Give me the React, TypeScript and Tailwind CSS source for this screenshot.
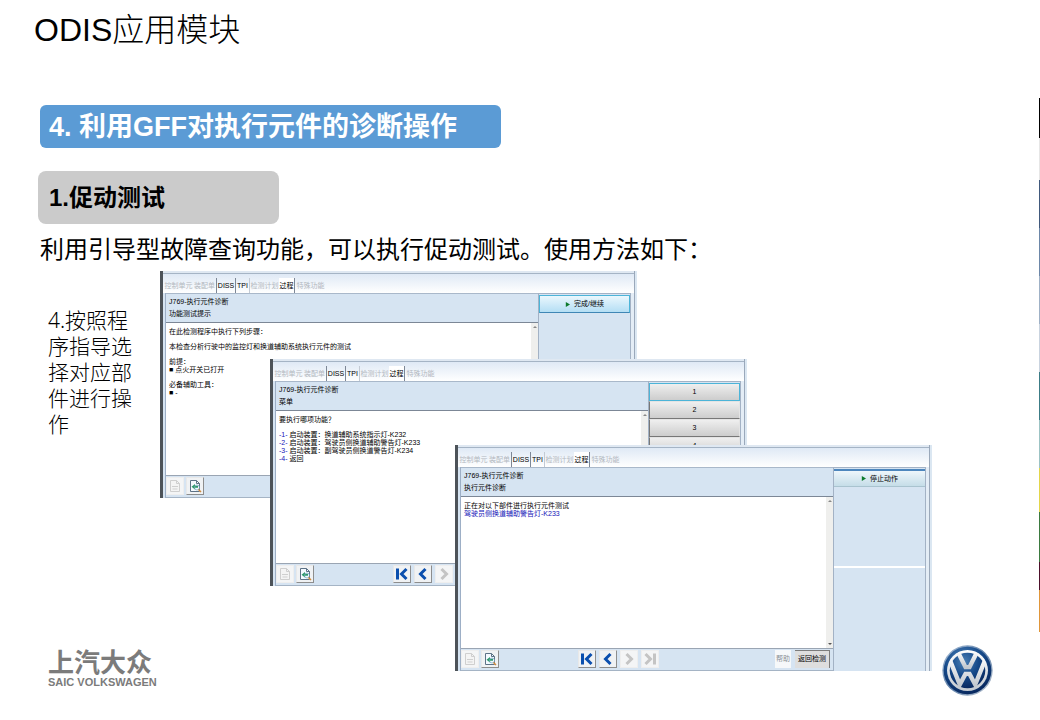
import React from 'react';

type WindowBody = {
  id: string;
  subtitle: string;
  place: string;
  height: string;
  groups: { text: string; mark?: string; link?: boolean }[][];
  showHelp?: boolean;
  split?: boolean;
  actions: React.ReactNode;
};

const TABS = ['控制单元', '装配单', 'DISS', 'TPI', '检测计划', '过程', '特殊功能'];

const TAB_STYLES: Record<string, string> = {
  控制单元: 'w-[29px] text-[#b3b8bf]',
  装配单: 'w-[23px] text-[#b3b8bf]',
  DISS: 'w-[19px] border-l border-[#7d8796] text-black',
  TPI: 'w-[14px] border-l border-[#7d8796] text-black',
  检测计划: 'w-[30px] border-l border-[#c3cad4] text-[#b3b8bf]',
  过程: 'w-4 border-r border-[#7d8796] bg-white text-black',
  特殊功能: 'w-[31px] text-[#b3b8bf]',
};

const STRIPES = [
  'h-10 bg-black',
  'h-[42px] bg-[#e6e6e6]',
  'h-12 bg-[#41597c]',
  'h-12 bg-[#6d87a8]',
  'h-12 bg-[#9fb1c6]',
  'h-12 bg-[#c9d3df]',
  'h-12 bg-[#3c7c86]',
  'h-12 bg-[#9cc3c4]',
  'h-11 bg-[#e3d64a]',
  'h-[50px] bg-[#3b7a3f]',
  'h-[28px] bg-[#4d0f2a]',
  'h-[42px] bg-[#e0963a]',
];

const PrintIcon = ({ active = false }: { active?: boolean }) => (
  <svg viewBox="0 0 16 16" className="h-4 w-4" fill="none">
    <path d="M3.5 2.5h6l3 3v8h-9z" fill={active ? '#f4f9ff' : '#f4f4f4'} stroke={active ? '#5d7286' : '#cfcfcf'} />
    <path d="M9.5 2.5v3h3" stroke={active ? '#5d7286' : '#cfcfcf'} />
    {active ? (
      <>
        <path d="M4.500 8.800l3.500-2.800v1.800h3v2H8v1.800z" fill="#2d9a6b" />
        <circle cx="10" cy="9.500" r="2.500" stroke="#7fa9c4" strokeWidth="0.800" />
        <path d="M11.500 11.500l2.500 2.500" stroke="#d08a3c" strokeWidth="1.500" />
      </>
    ) : (
      <path d="M5 8.500h6M5.500 11h5" stroke="#cfcfcf" />
    )}
  </svg>
);

const NavIcon = ({ d, active }: { d: string; active: boolean }) => (
  <svg viewBox="0 0 16 16" className="h-4 w-4" fill="none">
    <path d={d} stroke={active ? '#0b4fae' : '#c4c4c4'} strokeWidth="3" />
  </svg>
);

const NAV = [
  { label: '第一页', d: 'M3.500 2.500v11M12.500 3L7.500 8l5 5', active: true },
  { label: '上一页', d: 'M10.500 3L5.500 8l5 5', active: true },
  { label: '下一页', d: 'M5.500 3l5 5-5 5', active: false },
  { label: '最后一页', d: 'M3.500 3l5 5-5 5M12.500 2.500v11', active: false },
];

const toolButton = (active: boolean) =>
  active
    ? 'flex h-[18px] w-[18px] items-center justify-center border border-[#e8e8e8] border-r-[#8d8d8d] border-b-[#8d8d8d] bg-[#f0f2f4]'
    : 'flex h-[18px] w-[18px] items-center justify-center border border-[#eeeeee] bg-[#f4f5f6]';

const RunButton = ({ label, flat = false }: { label: string; flat?: boolean }) => (
  <button
    className={
      flat
        ? 'flex h-[18px] items-center justify-center gap-1 border-t-2 border-b border-t-[#4d86bd] border-b-[#a9c3cf] bg-linear-to-b from-[#eef6fb] to-[#c5dde8]'
        : 'flex h-[18px] items-center justify-center gap-1 border border-[#4cb4d8] border-b-[#3f86b5] bg-linear-to-b from-[#eaf7fd] to-[#b4def4]'
    }
  >
    <svg viewBox="0 0 6 6" className="h-[5px] w-[5px]">
      <path d="M1 0l5 3-5 3z" fill="#0c7a2c" />
    </svg>
    {label}
  </button>
);

const DiagnosisWindow = ({ win }: { win: WindowBody }) => (
  <section className={`absolute flex w-[477px] border-l-[3px] border-[#4d5359] bg-[#d6e4f2] text-[7px] leading-[8px] text-black ${win.place} ${win.height}`}>
    <div className="flex min-w-0 flex-1 flex-col border-r border-[#9aa8ba]">
      <div className="h-[3px] border-b border-[#a5b4c5] bg-[#dfe8f2]" />
      <nav className="flex h-[19px] items-stretch bg-linear-to-b from-[#dfe9f5] to-white pt-1 pl-px">
        {TABS.map((tab) => (
          <button key={tab} className={`shrink-0 text-center whitespace-nowrap ${TAB_STYLES[tab]}`}>{tab}</button>
        ))}
      </nav>
      <div className="flex min-h-0 flex-1 pl-[2px]">
        <div className="flex min-w-0 flex-1 flex-col border-l border-[#9dafc6]">
          <header className="flex h-[30px] flex-col gap-1 border-t border-b border-t-[#a9b8ca] border-b-[#7c8796] pt-1 pl-[3px]">
            <h3>J769-执行元件诊断</h3>
            <p>{win.subtitle}</p>
          </header>
          <div className="flex min-h-0 flex-1 bg-white">
            <div className="flex flex-1 flex-col gap-[7px] pt-[5px] pl-[3px] whitespace-nowrap">
              {win.groups.map((group, i) => (
                <div key={i}>
                  {group.map((line) => (
                    <p key={line.text} className={line.link ? 'text-[#1414b8]' : ''}>
                      {line.mark && <span className="text-[#1414b8]">{line.mark} </span>}
                      {line.text}
                    </p>
                  ))}
                </div>
              ))}
            </div>
            <div className="flex w-[7px] flex-col items-center justify-between bg-[#efefed] py-[3px]">
              <svg viewBox="0 0 4 2" className="h-[2px] w-1"><path d="M0 2l2-2 2 2z" fill="#888" /></svg>
              <svg viewBox="0 0 4 2" className="h-[2px] w-1"><path d="M0 0l2 2 2-2z" fill="#555" /></svg>
            </div>
          </div>
          <footer className="flex h-[23px] items-center border-t border-b border-t-[#9aa5b3] border-b-[#a5b4c5] pb-[2px]">
            <button aria-label="打印" className={toolButton(false)}><PrintIcon /></button>
            <button aria-label="打印预览" className={`ml-[2px] ${toolButton(true)}`}><PrintIcon active /></button>
            <div className="ml-[79px] flex gap-[3px]">
              {NAV.map((nav) => (
                <button key={nav.label} aria-label={nav.label} className={toolButton(nav.active)}><NavIcon d={nav.d} active={nav.active} /></button>
              ))}
            </div>
            {win.showHelp && (
              <div className="ml-auto flex gap-1 pr-[3px]">
                <button className="h-[18px] w-4 bg-[#f6f8fa] text-[#8b9097]">帮助</button>
                <button className="h-[18px] w-[35px] border-t border-r border-[#7c7c7c] bg-[#dedede]">返回检测</button>
              </div>
            )}
          </footer>
        </div>
        <aside className="w-[93px] border-t border-r border-l border-[#a3b2c5] text-center">
          <div className={`flex flex-col pt-px ${win.split ? 'h-[100px] border-b-2 border-white' : ''}`}>{win.actions}</div>
        </aside>
        <div className="w-[3px] bg-[#e4edf6]" />
      </div>
    </div>
    <div className="w-[2px] bg-[#dbe7f2]" />
  </section>
);

const WINDOWS: WindowBody[] = [
  {
    id: 'hint',
    subtitle: '功能测试提示',
    place: 'top-0 left-0',
    height: 'h-[227px]',
    groups: [
      [{ text: '在此检测程序中执行下列步骤：' }],
      [{ text: '本检查分析行驶中的监控灯和换道辅助系统执行元件的测试' }],
      [{ text: '前提：' }, { text: '■ 点火开关已打开' }],
      [{ text: '必备辅助工具：' }, { text: '■ -' }],
    ],
    actions: <RunButton label="完成/继续" />,
  },
  {
    id: 'menu',
    subtitle: '菜单',
    place: 'top-[88px] left-[110px]',
    height: 'h-[227px]',
    groups: [
      [{ text: '要执行哪项功能？' }],
      [
        { mark: '-1-', text: '启动装置：换道辅助系统指示灯-K232' },
        { mark: '-2-', text: '启动装置：驾驶员侧换道辅助警告灯-K233' },
        { mark: '-3-', text: '启动装置：副驾驶员侧换道警告灯-K234' },
        { mark: '-4-', text: '返回' },
      ],
    ],
    actions: ['1', '2', '3', '4'].map((n) => (
      <button key={n} className={`h-[18px] border ${n === '1' ? 'border-[#4cb4d8]' : 'border-t-[#e4e4e4] border-r-[#e4e4e4] border-b-[#777777] border-l-[#777777]'} bg-linear-to-b from-[#efefef] to-[#cdcdcd]`}>{n}</button>
    )),
  },
  {
    id: 'run',
    subtitle: '执行元件诊断',
    place: 'top-[174px] left-[295px]',
    height: 'h-[226px]',
    groups: [[{ text: '正在对以下部件进行执行元件测试' }, { text: '驾驶员侧换道辅助警告灯-K233', link: true }]],
    showHelp: true,
    split: true,
    actions: <RunButton label="停止动作" flat />,
  },
];

const BrandBadge = () => (
  <svg viewBox="0 0 152 152" className="h-[51px] w-[51px]" role="img" aria-label="Volkswagen">
    <defs>
      <linearGradient id="rim" x1="0" y1="0" x2="1" y2="1">
        <stop offset="0" stopColor="#a9bfd8" />
        <stop offset="0.5" stopColor="#5d7fa8" />
        <stop offset="1" stopColor="#c2cbd6" />
      </linearGradient>
      <radialGradient id="disc" cx="0.4" cy="0.25" r="0.8">
        <stop offset="0" stopColor="#4a7fb5" />
        <stop offset="0.5" stopColor="#164a8a" />
        <stop offset="1" stopColor="#06245a" />
      </radialGradient>
      <linearGradient id="chrome" x1="0" y1="0" x2="0" y2="1">
        <stop offset="0" stopColor="#ffffff" />
        <stop offset="1" stopColor="#c3c9d0" />
      </linearGradient>
      <clipPath id="face"><circle cx="76" cy="76" r="60" /></clipPath>
    </defs>
    <circle cx="76" cy="76" r="75" fill="url(#rim)" />
    <circle cx="76" cy="76" r="71" fill="url(#disc)" />
    <circle cx="76" cy="76" r="61" fill="url(#chrome)" />
    <circle cx="76" cy="76" r="53" fill="url(#disc)" />
    <g clipPath="url(#face)" fill="none" stroke="url(#chrome)" strokeWidth="13">
      <path d="M46 18L70 66H82L106 18" />
      <path d="M20 36L53 118L70 86H82L99 118L132 36" />
    </g>
  </svg>
);

export default function App() {
  return (
    <div className="flex min-h-screen bg-white font-['Liberation_Sans','Noto_Sans_CJK_SC',sans-serif] text-black" lang="zh-CN">
      <main className="flex min-w-0 flex-1 flex-col items-start pt-2">
        <h1 className="pl-[34px] text-[32px] leading-[44px] font-light">ODIS应用模块</h1>
        <h2 className="mt-[53px] ml-10 h-[43px] w-[461px] rounded-md bg-[#5b9bd5] pl-[9px] text-[27px] leading-[44px] font-bold text-white">4. 利用GFF对执行元件的诊断操作</h2>
        <h2 className="mt-[23px] ml-[38px] h-[53px] w-[241px] rounded-lg bg-[#cbcbcb] pl-[11px] text-2xl leading-[53px] font-bold">1.促动测试</h2>
        <p className="mt-2 pl-10 text-2xl leading-[36px]">利用引导型故障查询功能，可以执行促动测试。使用方法如下：</p>
        <div className="mt-[3px] flex">
          <div className="flex w-40 shrink-0 flex-col justify-between pl-12">
            <p className="mt-9 w-[88px] font-['Noto_Sans','Noto_Sans_CJK_SC',sans-serif] text-[21px] leading-[26px] font-light">4.按照程序指导选择对应部件进行操作</p>
            <div className="mb-2 whitespace-nowrap text-[#7b7b7b]">
              <p className="text-[26px] leading-[26px] font-bold">上汽大众</p>
              <p className="text-[11px] leading-[12px] font-bold">SAIC VOLKSWAGEN</p>
            </div>
          </div>
          <div className="relative h-[425px] w-[772px] shrink-0">
            {WINDOWS.map((win) => <DiagnosisWindow key={win.id} win={win} />)}
          </div>
          <div className="ml-[10px] self-end"><BrandBadge /></div>
        </div>
      </main>
      <div className="w-px pt-[98px]">
        {STRIPES.map((stripe) => <div key={stripe} className={stripe} />)}
      </div>
    </div>
  );
}
